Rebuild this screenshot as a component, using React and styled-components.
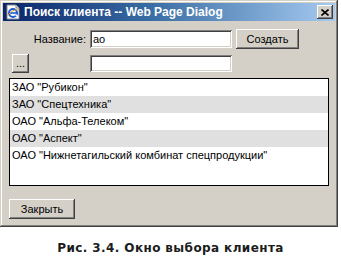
import React from 'react';
import styled, {createGlobalStyle} from 'styled-components';

const Global = createGlobalStyle`
  html, body {
    margin: 0;
    padding: 0;
    background: #fff;
  }
  body {
    font-family: "Liberation Sans", Arial, sans-serif;
    font-size: 11px;
    color: #000;
  }
`

const Page = styled.div`
  width: 341px;
  height: 265px;
  display: flex;
  flex-direction: column;
`

const Window = styled.div`
  width: 338px;
  box-sizing: border-box;
  background: #d4d0c8;
  padding: 3px 3px 8px 3px;
  box-shadow: inset -1px -1px 0 #404040, inset 1px 1px 0 #d4d0c8,
    inset -2px -2px 0 #808080, inset 2px 2px 0 #fff;
`

const TitleBar = styled.div`
  height: 18px;
  display: flex;
  align-items: center;
  padding: 0 2px 0 2px;
  background: linear-gradient(to right, #0a246a 0%, #3a6ea5 45%, #a6caf0 100%);
`

const Title = styled.span`
  flex: 1;
  margin-left: 3px;
  color: #fff;
  font-weight: bold;
  font-size: 12px;
  white-space: nowrap;
`

const CloseBox = styled.div`
  width: 16px;
  height: 14px;
  background: #d4d0c8;
  display: flex;
  align-items: center;
  justify-content: center;
  box-sizing: border-box;
  box-shadow: inset -1px -1px 0 #404040, inset 1px 1px 0 #fff,
    inset -2px -2px 0 #808080;
`

const Content = styled.div`
  padding: 8px 0 0 6px;
  display: flex;
  flex-direction: column;
`

const Form = styled.div`
  display: grid;
  grid-template-columns: 77px 142px 63px;
  grid-template-rows: 20px 19px;
  column-gap: 4px;
  row-gap: 5px;
  align-items: center;
`

const Label = styled.label`
  text-align: right;
  font-size: 11px;
`

const Input = styled.input`
  box-sizing: border-box;
  height: ${p => p.$h || 18}px;
  width: 142px;
  border: none;
  padding: 0 3px;
  font-family: "Liberation Sans", Arial, sans-serif;
  font-size: 11px;
  background: #fff;
  outline: none;
  box-shadow: inset 1px 1px 0 #808080, inset -1px -1px 0 #fff,
    inset 2px 2px 0 #404040, inset -2px -2px 0 #d4d0c8;
`

const Button = styled.button`
  box-sizing: border-box;
  width: ${p => p.$w}px;
  height: ${p => p.$h || 20}px;
  margin-left: ${p => p.$ml || 0}px;
  padding: 0 0 1px 0;
  border: none;
  background: #d4d0c8;
  font-family: "Liberation Sans", Arial, sans-serif;
  font-size: 11px;
  color: #000;
  box-shadow: inset -1px -1px 0 #404040, inset 1px 1px 0 #fff,
    inset -2px -2px 0 #808080;
`

const List = styled.div`
  margin-top: 5px;
  width: 320px;
  height: 108px;
  box-sizing: border-box;
  border: 1px solid #000;
  background: #fff;
  display: flex;
  flex-direction: column;
`

const Row = styled.div`
  height: 17px;
  line-height: 17px;
  padding-left: 2px;
  font-size: 11px;
  white-space: nowrap;
  background: ${p => (p.$alt ? '#e0e0e0' : '#fff')};
`

const Footer = styled.div`
  margin-top: 13px;
`

const Caption = styled.div`
  margin-top: 14px;
  text-align: center;
  font-family: "DejaVu Sans", Verdana, sans-serif;
  font-weight: bold;
  font-size: 12px;
  letter-spacing: 0.4px;
  color: #1c1c1c;
`

const IeIcon = () => (
    <svg width="16" height="16" viewBox="0 0 16 16">
        <path d="M2 1h9l3 3v11H2z" fill="#fff" stroke="#8a8a8a" strokeWidth="1"/>
        <path d="M11 1v3h3" fill="#e0e0e0" stroke="#8a8a8a" strokeWidth="1"/>
        <circle cx="8" cy="9" r="4" fill="none" stroke="#1c5ad8" strokeWidth="2"/>
        <path d="M4.5 9h7" stroke="#1c5ad8" strokeWidth="1.6"/>
        <path d="M10.5 11.5L12 11" stroke="#fff" strokeWidth="1.5"/>
        <path d="M2.5 12c3-5 8-7 11-6" fill="none" stroke="#f0a020" strokeWidth="1"/>
    </svg>
)

const CloseGlyph = () => (
    <svg width="8" height="7" viewBox="0 0 8 7">
        <path d="M0.5 0.5L7.5 6.5M7.5 0.5L0.5 6.5" stroke="#000" strokeWidth="1.6"/>
    </svg>
)

const clients = [
    'ЗАО "Рубикон"',
    'ЗАО "Спецтехника"',
    'ОАО "Альфа-Телеком"',
    'ОАО "Аспект"',
    'ОАО "Нижнетагильский комбинат спецпродукции"',
]

const App = () => {
    return (
        <Page>
            <Global/>
            <Window>
                <TitleBar>
                    <IeIcon/>
                    <Title>Поиск клиента -- Web Page Dialog</Title>
                    <CloseBox><CloseGlyph/></CloseBox>
                </TitleBar>
                <Content>
                    <Form>
                        <Label>Название:</Label>
                        <Input defaultValue="ao"/>
                        <Button $w={63}>Создать</Button>
                        <Button $w={17} $h={19} $ml={3}>...</Button>
                        <Input $h={17}/>
                    </Form>
                    <List>
                        {clients.map((c, i) => (
                            <Row key={c} $alt={i % 2 === 1}>{c}</Row>
                        ))}
                    </List>
                    <Footer>
                        <Button $w={66}>Закрыть</Button>
                    </Footer>
                </Content>
            </Window>
            <Caption>Рис. 3.4. Окно выбора клиента</Caption>
        </Page>
    );
};

export default App;
